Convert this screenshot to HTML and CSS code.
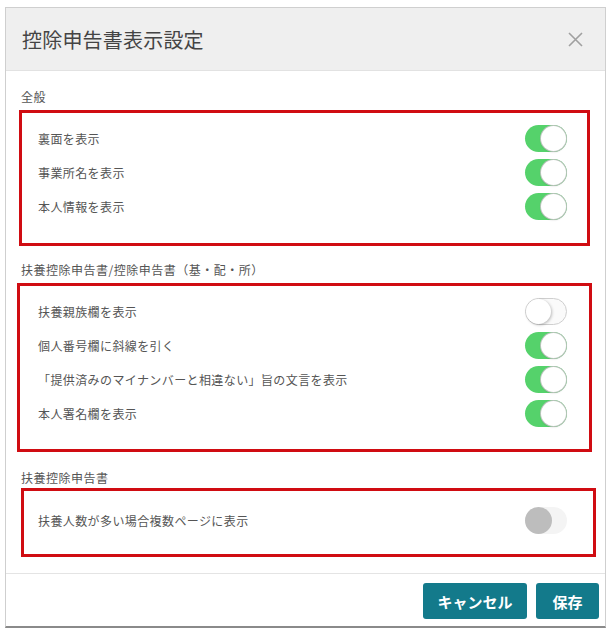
FILE: index.html
```html
<!DOCTYPE html>
<html lang="ja">
<head>
<meta charset="utf-8">
<title>控除申告書表示設定</title>
<link rel="stylesheet" href="styles.css">
</head>
<body>
<div class="modal">
  <div class="modal-header">
    <h1 class="modal-title">控除申告書表示設定</h1>
    <button class="close-btn" aria-label="閉じる">
      <svg width="15" height="15" viewBox="0 0 15 15"><path d="M1 1L14 14M14 1L1 14" stroke="#a0a0a0" stroke-width="1.6" fill="none"/></svg>
    </button>
  </div>
  <div class="modal-body">
    <div class="section-label first">全般</div>
    <div class="group group-a">
      <div class="row"><span>裏面を表示</span><span class="toggle on"><span class="knob"></span></span></div>
      <div class="row"><span>事業所名を表示</span><span class="toggle on"><span class="knob"></span></span></div>
      <div class="row"><span>本人情報を表示</span><span class="toggle on"><span class="knob"></span></span></div>
    </div>

    <div class="section-label">扶養控除申告書/控除申告書（基・配・所）</div>
    <div class="group group-b">
      <div class="row"><span>扶養親族欄を表示</span><span class="toggle off"><span class="knob"></span></span></div>
      <div class="row"><span>個人番号欄に斜線を引く</span><span class="toggle on"><span class="knob"></span></span></div>
      <div class="row"><span>「提供済みのマイナンバーと相違ない」旨の文言を表示</span><span class="toggle on"><span class="knob"></span></span></div>
      <div class="row"><span>本人署名欄を表示</span><span class="toggle on"><span class="knob"></span></span></div>
    </div>

    <div class="section-label third">扶養控除申告書</div>
    <div class="group group-c">
      <div class="row"><span>扶養人数が多い場合複数ページに表示</span><span class="toggle disabled"><span class="knob"></span></span></div>
    </div>
  </div>
  <div class="modal-footer">
    <button class="btn btn-cancel">キャンセル</button>
    <button class="btn btn-save">保存</button>
  </div>
</div>
</body>
</html>
```

FILE: styles.css
```css
* { box-sizing: border-box; }

body {
  margin: 0;
  background: #ffffff;
  font-family: "Noto Sans CJK JP", "Noto Sans", sans-serif;
  color: #555;
}

.modal {
  margin: 7px 6px 0 5px;
  width: 601px;
  border: 1px solid #cfcfcf;
  border-bottom: 2px solid #8a8a8a;
  background: #fff;
}

.modal-header {
  height: 63px;
  background: #efefef;
  border-bottom: 1px solid #e2e2e2;
  display: flex;
  align-items: center;
  justify-content: space-between;
  padding: 0 22px 0 16px;
}

.modal-title {
  margin: 0;
  font-size: 20px;
  font-weight: normal;
  color: #444;
  letter-spacing: 0.2px;
}

.close-btn {
  border: 0;
  background: none;
  padding: 0;
  width: 15px;
  height: 15px;
  display: flex;
}

.modal-body {
  padding: 18px 0 16px 0;
}

.section-label {
  font-size: 12px;
  line-height: 16px;
  letter-spacing: 0.5px;
  color: #555;
  padding-left: 15px;
  margin-top: 16px;
  margin-bottom: 5px;
}
.section-label.first { margin-top: 0; }
.section-label.third { margin-top: 18px; margin-bottom: 2px; }

.group {
  border: 3px solid #d00c12;
  padding: 8px 20px 19px 16px;
}
.group-a { margin: 0 15px 0 13px; padding-bottom: 20px; }
.group-b { margin: 0 13px 0 11px; padding-right: 22px; padding-left: 18px; }
.group-c { margin: 0 9px 0 15px; padding: 12px 26px 17px 14px; }

.row {
  height: 34px;
  display: flex;
  align-items: center;
  justify-content: space-between;
  font-size: 12px;
  letter-spacing: 0.4px;
  color: #555;
}

.toggle {
  width: 42px;
  height: 27px;
  border-radius: 14px;
  position: relative;
  flex: none;
}
.toggle .knob {
  position: absolute;
  top: 1px;
  width: 25px;
  height: 25px;
  border-radius: 50%;
  background: #fff;
}
.toggle.on {
  background: #55d26b;
}
.toggle.on .knob {
  right: 1px;
  box-shadow: 0 0 0 1px #b9c4bb, 0 1px 2px rgba(0,0,0,0.2);
}
.toggle.off {
  background: #fafafa;
  border: 1px solid #cfcfcf;
}
.toggle.off .knob {
  top: 0;
  left: 0;
  box-shadow: 1px 1px 3px rgba(0,0,0,0.25);
}
.toggle.disabled {
  background: #f4f4f4;
}
.toggle.disabled .knob {
  left: 0;
  top: 0;
  width: 27px;
  height: 27px;
  background: #bdbdbd;
}

.modal-footer {
  border-top: 1px solid #e4e4e4;
  padding: 9px 6px 7px 0;
  display: flex;
  justify-content: flex-end;
  gap: 9px;
}

.btn {
  height: 36px;
  border: 0;
  border-radius: 3px;
  background: #137a8b;
  color: #fff;
  font-family: "Noto Sans CJK JP", sans-serif;
  font-size: 15px;
  font-weight: bold;
  padding: 0;
}
.btn-cancel { width: 104px; }
.btn-save { width: 63px; }
```
